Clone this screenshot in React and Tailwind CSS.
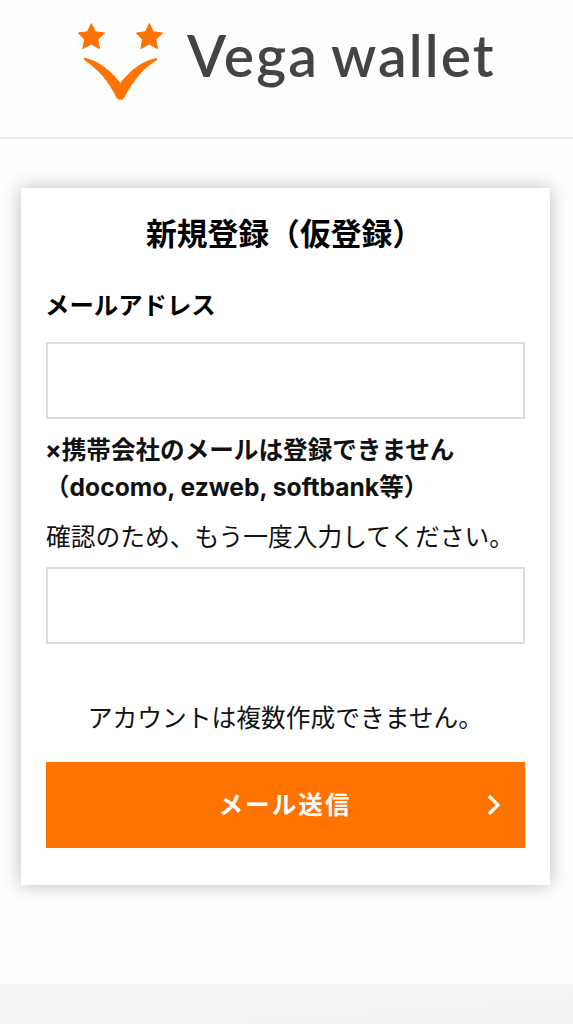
import React, { useState } from "react";

function LogoMark() {
  return (
    <svg
      className="w-[90px] h-[84px] shrink-0"
      viewBox="76 20 90 84"
      fill="#ff7300"
      stroke="#ff7300"
      strokeWidth="1"
      strokeLinejoin="round"
      xmlns="http://www.w3.org/2000/svg"
    >
      <path d="M91.4 23.6L95.3 31.8L104.6 33L97.8 39.5L99.5 48.6L91.4 44.2L82.8 48.6L84.6 39.5L78.4 33L87.5 31.8Z" />
      <path d="M149.4 23.6L153.3 31.8L162.6 33L155.8 39.5L157.5 48.6L149.4 44.2L140.8 48.6L142.6 39.5L136.4 33L145.5 31.8Z" />
      <path d="M84.5 58.2C98 61 110.5 70.5 120.4 83.6C129.5 71 142 61.5 156.5 58.4L156.5 60C143 68 133 80 123.6 98C122.5 99.8 118.3 99.8 117.2 98C108.5 80.5 98 68.5 84.5 59.8Z" />
    </svg>
  );
}

export default function RegisterPage() {
  const [email, setEmail] = useState("");
  const [emailConfirm, setEmailConfirm] = useState("");

  const handleSubmit = (e) => {
    e.preventDefault();
  };

  return (
    <div className="h-[1024px] flex flex-col overflow-hidden bg-[#fefefe] text-[#111] font-[Inter,'Noto_Sans_CJK_JP',sans-serif]">
      <header className="h-[139px] shrink-0 flex items-start border-b-2 border-[#ebebeb] pl-[76px] pt-5">
        <LogoMark />
        <h1 className="ml-[21px] mt-[2px] whitespace-nowrap font-[Lato,sans-serif] text-[57px] leading-[66px] font-semibold tracking-[2.1px] [word-spacing:-3px] text-[#444]">
          Vega wallet
        </h1>
      </header>

      <main className="grow pl-[21px] pr-[23px] pt-[49px]">
        <form
          onSubmit={handleSubmit}
          className="h-[697px] flex flex-col bg-white px-[25px] pt-[26px] shadow-[0_0_18px_rgba(0,0,0,0.27)]"
        >
          <h2 className="-ml-[2px] text-center text-[30.8px] leading-10 font-bold text-black whitespace-nowrap">
            新規登録（仮登録）
          </h2>

          <label
            htmlFor="email"
            className="mt-[33px] -ml-px block text-[24.4px] leading-[37px] font-bold text-black"
          >
            メールアドレス
          </label>
          <input
            type="email"
            id="email"
            value={email}
            onChange={(e) => setEmail(e.target.value)}
            className="mt-[18px] h-[77px] w-full shrink-0 border-2 border-[#d6dfe3] bg-white px-4 text-2xl focus:outline-none"
          />

          <p className="mt-[13px] -ml-px text-[24.6px] leading-[37px] font-bold whitespace-nowrap">
            ×携帯会社のメールは登録できません
            <br />
            <span>（docomo, ezweb, softbank等）</span>
          </p>

          <label
            htmlFor="emailConfirm"
            className="mt-[13px] block text-[24.75px] leading-[37px] whitespace-nowrap"
          >
            確認のため、もう一度入力してください。
          </label>
          <input
            type="email"
            id="emailConfirm"
            value={emailConfirm}
            onChange={(e) => setEmailConfirm(e.target.value)}
            className="mt-[11px] h-[77px] w-full shrink-0 border-2 border-[#d6dfe3] bg-white px-4 text-2xl focus:outline-none"
          />

          <p className="mt-[56px] text-center text-[24.75px] leading-[37px] whitespace-nowrap">
            アカウントは複数作成できません。
          </p>

          <button
            type="submit"
            className="mt-[25px] h-[86px] shrink-0 grid grid-cols-[1fr_auto_1fr] items-center bg-[#ff7300] text-white"
          >
            <span className="col-start-2 -ml-px text-[24.6px] leading-[37px] font-bold tracking-[2px]">
              メール送信
            </span>
            <svg
              className="w-[14px] h-[22px] justify-self-end mr-[24px]"
              viewBox="0 0 14 22"
              fill="none"
              stroke="currentColor"
              strokeWidth="3.2"
              xmlns="http://www.w3.org/2000/svg"
            >
              <path d="M2 2L11 11L2 20" />
            </svg>
          </button>
        </form>
      </main>

      <footer className="h-10 shrink-0 bg-linear-to-br from-[#f5f5f5] to-[#f2f2f2]" />
    </div>
  );
}
